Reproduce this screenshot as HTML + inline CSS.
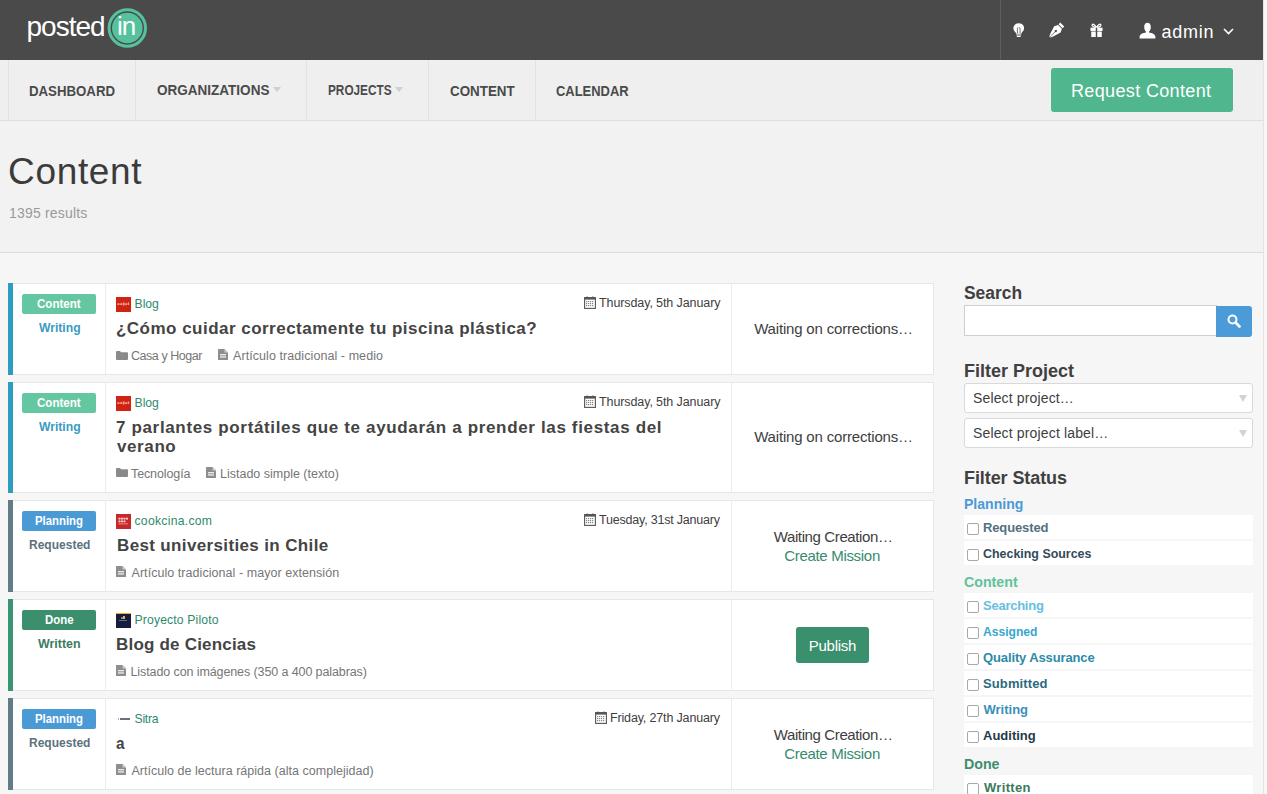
<!DOCTYPE html><html><head><meta charset="utf-8"><style>
html,body{margin:0;padding:0;width:1267px;height:794px;overflow:hidden;background:#f2f2f2;font-family:"Liberation Sans",sans-serif}
.t{position:absolute;white-space:nowrap;line-height:1}
</style></head><body>
<div style="position:absolute;left:0;top:253px;width:1263px;height:541px;background:#f6f6f6"></div>
<div style="position:absolute;left:0;top:0;width:1263px;height:60px;background:#4a4a4a"></div>
<div style="position:absolute;left:1000px;top:0;width:1px;height:60px;background:#5e5e5e"></div>
<svg style="position:absolute;left:107px;top:8px" width="41" height="41" viewBox="0 0 41 41">
<circle cx="20.3" cy="20" r="18.2" fill="none" stroke="#55c29d" stroke-width="3"/>
<circle cx="20.3" cy="20" r="15.3" fill="#55c29d"/>
</svg>
<svg style="position:absolute;left:1012.5px;top:22.5px" width="11.5" height="14.6" viewBox="0 0 13 16.5">
<path d="M6.5 0.3 C2.9 0.3 0.4 2.8 0.4 5.9 C0.4 8.2 1.8 9.3 2.9 10.6 C3.4 11.2 3.6 11.7 3.6 12.2 L9.4 12.2 C9.4 11.7 9.6 11.2 10.1 10.6 C11.2 9.3 12.6 8.2 12.6 5.9 C12.6 2.8 10.1 0.3 6.5 0.3 Z" fill="#fff"/>
<path d="M5 11.5 L5 6.2 Q5 4.9 6 5.2 M8 11.5 L8 6.2 Q8 4.9 7 5.2" stroke="#4a4a4a" stroke-width="0.9" fill="none"/>
<rect x="3.8" y="12.9" width="5.4" height="1.2" fill="#fff"/><rect x="4.2" y="14.6" width="4.6" height="1.3" rx="0.6" fill="#fff"/>
</svg>
<svg style="position:absolute;left:1049px;top:22px" width="16" height="16" viewBox="0 0 16 16">
<path d="M11.2 0.6 L15.2 4.6 L13.6 6.2 L9.6 2.2 Z" fill="#fff"/>
<path d="M9.1 2.9 L12.9 6.7 L11.6 10.6 L4.2 14.6 L1.3 15.6 L0.9 15.2 L6.2 9.9 A1.1 1.1 0 1 0 5.9 9.6 L0.6 14.9 L0.3 14.5 L1.4 11.5 L5.2 4.2 Z" fill="#fff"/>
</svg>
<svg style="position:absolute;left:1089.5px;top:22.5px" width="13" height="14.8" viewBox="0 0 14 16">
<path d="M7 5 C5.5 2.5 3.5 0.6 2.5 1.6 C1.5 2.6 3.5 4.6 7 5 C10.5 4.6 12.5 2.6 11.5 1.6 C10.5 0.6 8.5 2.5 7 5 Z" fill="none" stroke="#fff" stroke-width="1.3"/>
<rect x="0.5" y="5" width="13" height="3.6" fill="#fff"/>
<rect x="1.3" y="9.2" width="11.4" height="6.6" fill="#fff"/>
<rect x="6.2" y="5" width="1.6" height="10.8" fill="#4a4a4a"/>
</svg>
<svg style="position:absolute;left:1139px;top:22px" width="17" height="17" viewBox="0 0 17 17">
<path d="M8.5 0.8 C6.2 0.8 5.2 2.6 5.2 4.9 C5.2 7.0 6.0 8.7 7.0 9.6 L7.0 10.4 C4.0 10.9 0.9 12.0 0.6 14.5 L0.6 16.4 L16.4 16.4 L16.4 14.5 C16.1 12.0 13.0 10.9 10.0 10.4 L10.0 9.6 C11.0 8.7 11.8 7.0 11.8 4.9 C11.8 2.6 10.8 0.8 8.5 0.8 Z" fill="#fff"/>
</svg>
<svg style="position:absolute;left:1223px;top:28px" width="11" height="7" viewBox="0 0 11 7"><path d="M1 1 L5.5 5.5 L10 1" fill="none" stroke="#fff" stroke-width="1.6"/></svg>
<div style="position:absolute;left:0;top:60px;width:1263px;height:61px;background:#efefef;border-bottom:1px solid #dedede;box-sizing:border-box"></div>
<div style="position:absolute;left:8px;top:60px;width:1px;height:60px;background:#e2e2e2"></div>
<div style="position:absolute;left:135px;top:60px;width:1px;height:60px;background:#e2e2e2"></div>
<div style="position:absolute;left:306px;top:60px;width:1px;height:60px;background:#e2e2e2"></div>
<div style="position:absolute;left:428px;top:60px;width:1px;height:60px;background:#e2e2e2"></div>
<div style="position:absolute;left:535px;top:60px;width:1px;height:60px;background:#e2e2e2"></div>
<div style="position:absolute;left:273px;top:87px;width:0;height:0;border-left:4px solid transparent;border-right:4px solid transparent;border-top:5px solid #cfcfcf"></div>
<div style="position:absolute;left:394.5px;top:87px;width:0;height:0;border-left:4px solid transparent;border-right:4px solid transparent;border-top:5px solid #cfcfcf"></div>
<div style="position:absolute;left:1051px;top:68px;width:182px;height:44px;background:#50b68e;border-radius:3px"></div>
<div style="position:absolute;left:1263px;top:0;width:4px;height:794px;background:#f7f7f7;border-left:1px solid #e4e4e4;box-sizing:border-box"></div>
<div style="position:absolute;left:0;top:252px;width:1263px;height:1px;background:#dcdcdc"></div>
<div style="position:absolute;left:8px;top:283px;width:926px;height:92px;background:#fff;border:1px solid #e7e7e7;border-left:none;box-sizing:border-box"></div>
<div style="position:absolute;left:8px;top:283px;width:5px;height:92px;background:#2c9dc0"></div>
<div style="position:absolute;left:105px;top:284px;width:1px;height:90px;background:#ececec"></div>
<div style="position:absolute;left:731px;top:284px;width:1px;height:90px;background:#ececec"></div>
<div style="position:absolute;left:22px;top:294px;width:74px;height:20px;background:#65c7a1;border-radius:2px"></div>
<div style="position:absolute;left:116px;top:297px;width:15px;height:15px;background:#d02312"></div>
<svg style="position:absolute;left:117px;top:302px" width="13" height="4" viewBox="0 0 13 4"><path d="M0.5 1.2h2v1.8h-2zM3.2 1.2h2v1.8h-2zM5.8 0.6h1.8v2.8h-1.8zM8.2 1.2h2v1.8h-2zM10.8 0.4h1.4v2.6h-1.4z" fill="#f0a49c"/></svg>
<svg style="position:absolute;left:584px;top:296px" width="12" height="13" viewBox="0 0 12 13"><rect x="0.6" y="1.6" width="10.8" height="10.8" fill="#fff" stroke="#555" stroke-width="1.1"/><rect x="0.6" y="1.6" width="10.8" height="2" fill="#555"/><rect x="2" y="5" width="1.2" height="1.2" fill="#888"/><rect x="2" y="7" width="1.2" height="1.2" fill="#888"/><rect x="2" y="9" width="1.2" height="1.2" fill="#888"/><rect x="4" y="5" width="1.2" height="1.2" fill="#888"/><rect x="4" y="7" width="1.2" height="1.2" fill="#888"/><rect x="4" y="9" width="1.2" height="1.2" fill="#888"/><rect x="6" y="5" width="1.2" height="1.2" fill="#888"/><rect x="6" y="7" width="1.2" height="1.2" fill="#888"/><rect x="6" y="9" width="1.2" height="1.2" fill="#888"/><rect x="8" y="5" width="1.2" height="1.2" fill="#888"/><rect x="8" y="7" width="1.2" height="1.2" fill="#888"/><rect x="8" y="9" width="1.2" height="1.2" fill="#888"/><rect x="2.5" y="0.5" width="1.2" height="2" fill="#555"/><rect x="8.2" y="0.5" width="1.2" height="2" fill="#555"/></svg>
<svg style="position:absolute;left:116px;top:351px" width="12" height="9" viewBox="0 0 12 9"><path d="M0 1 Q0 0 1 0 L4 0 L5 1.3 L11 1.3 Q12 1.3 12 2.3 L12 8 Q12 9 11 9 L1 9 Q0 9 0 8 Z" fill="#8a8a8a"/></svg>
<svg style="position:absolute;left:217.5px;top:349px" width="10" height="11" viewBox="0 0 10 11"><path d="M0.5 0 L6.5 0 L10 3.5 L10 10.5 Q10 11 9.5 11 L0.5 11 Q0 11 0 10.5 L0 0.5 Q0 0 0.5 0 Z" fill="#8e8e8e"/><path d="M6.5 0 L6.5 3.5 L10 3.5" fill="#c9c9c9"/><rect x="2" y="5.2" width="6" height="1.1" fill="#fff"/><rect x="2" y="7.4" width="6" height="1.1" fill="#fff"/></svg>
<div style="position:absolute;left:8px;top:382px;width:926px;height:111px;background:#fff;border:1px solid #e7e7e7;border-left:none;box-sizing:border-box"></div>
<div style="position:absolute;left:8px;top:382px;width:5px;height:111px;background:#2c9dc0"></div>
<div style="position:absolute;left:105px;top:383px;width:1px;height:109px;background:#ececec"></div>
<div style="position:absolute;left:731px;top:383px;width:1px;height:109px;background:#ececec"></div>
<div style="position:absolute;left:22px;top:393px;width:74px;height:20px;background:#65c7a1;border-radius:2px"></div>
<div style="position:absolute;left:116px;top:396px;width:15px;height:15px;background:#d02312"></div>
<svg style="position:absolute;left:117px;top:401px" width="13" height="4" viewBox="0 0 13 4"><path d="M0.5 1.2h2v1.8h-2zM3.2 1.2h2v1.8h-2zM5.8 0.6h1.8v2.8h-1.8zM8.2 1.2h2v1.8h-2zM10.8 0.4h1.4v2.6h-1.4z" fill="#f0a49c"/></svg>
<svg style="position:absolute;left:584px;top:395px" width="12" height="13" viewBox="0 0 12 13"><rect x="0.6" y="1.6" width="10.8" height="10.8" fill="#fff" stroke="#555" stroke-width="1.1"/><rect x="0.6" y="1.6" width="10.8" height="2" fill="#555"/><rect x="2" y="5" width="1.2" height="1.2" fill="#888"/><rect x="2" y="7" width="1.2" height="1.2" fill="#888"/><rect x="2" y="9" width="1.2" height="1.2" fill="#888"/><rect x="4" y="5" width="1.2" height="1.2" fill="#888"/><rect x="4" y="7" width="1.2" height="1.2" fill="#888"/><rect x="4" y="9" width="1.2" height="1.2" fill="#888"/><rect x="6" y="5" width="1.2" height="1.2" fill="#888"/><rect x="6" y="7" width="1.2" height="1.2" fill="#888"/><rect x="6" y="9" width="1.2" height="1.2" fill="#888"/><rect x="8" y="5" width="1.2" height="1.2" fill="#888"/><rect x="8" y="7" width="1.2" height="1.2" fill="#888"/><rect x="8" y="9" width="1.2" height="1.2" fill="#888"/><rect x="2.5" y="0.5" width="1.2" height="2" fill="#555"/><rect x="8.2" y="0.5" width="1.2" height="2" fill="#555"/></svg>
<svg style="position:absolute;left:116px;top:468px" width="12" height="9" viewBox="0 0 12 9"><path d="M0 1 Q0 0 1 0 L4 0 L5 1.3 L11 1.3 Q12 1.3 12 2.3 L12 8 Q12 9 11 9 L1 9 Q0 9 0 8 Z" fill="#8a8a8a"/></svg>
<svg style="position:absolute;left:205.5px;top:467px" width="10" height="11" viewBox="0 0 10 11"><path d="M0.5 0 L6.5 0 L10 3.5 L10 10.5 Q10 11 9.5 11 L0.5 11 Q0 11 0 10.5 L0 0.5 Q0 0 0.5 0 Z" fill="#8e8e8e"/><path d="M6.5 0 L6.5 3.5 L10 3.5" fill="#c9c9c9"/><rect x="2" y="5.2" width="6" height="1.1" fill="#fff"/><rect x="2" y="7.4" width="6" height="1.1" fill="#fff"/></svg>
<div style="position:absolute;left:8px;top:500px;width:926px;height:92px;background:#fff;border:1px solid #e7e7e7;border-left:none;box-sizing:border-box"></div>
<div style="position:absolute;left:8px;top:500px;width:5px;height:92px;background:#617b87"></div>
<div style="position:absolute;left:105px;top:501px;width:1px;height:90px;background:#ececec"></div>
<div style="position:absolute;left:731px;top:501px;width:1px;height:90px;background:#ececec"></div>
<div style="position:absolute;left:22px;top:511px;width:74px;height:20px;background:#4a9ad6;border-radius:2px"></div>
<div style="position:absolute;left:116px;top:514px;width:15px;height:15px;background:#c8282a"></div>
<svg style="position:absolute;left:118px;top:517px" width="11" height="9" viewBox="0 0 11 9"><path d="M0.5 0.8h2v1.6h-2zM3 0.8h2v1.6h-2zM5.5 0.8h2v1.6h-2zM8 0.8h2v1.6h-2zM0.5 3.6h2v1.6h-2zM3 3.6h2v1.6h-2zM5.5 3.6h2v1.6h-2z" fill="#f4d4d4"/><rect x="0.5" y="6.5" width="9.5" height="0.8" fill="#e8a8a8"/></svg>
<svg style="position:absolute;left:584px;top:513px" width="12" height="13" viewBox="0 0 12 13"><rect x="0.6" y="1.6" width="10.8" height="10.8" fill="#fff" stroke="#555" stroke-width="1.1"/><rect x="0.6" y="1.6" width="10.8" height="2" fill="#555"/><rect x="2" y="5" width="1.2" height="1.2" fill="#888"/><rect x="2" y="7" width="1.2" height="1.2" fill="#888"/><rect x="2" y="9" width="1.2" height="1.2" fill="#888"/><rect x="4" y="5" width="1.2" height="1.2" fill="#888"/><rect x="4" y="7" width="1.2" height="1.2" fill="#888"/><rect x="4" y="9" width="1.2" height="1.2" fill="#888"/><rect x="6" y="5" width="1.2" height="1.2" fill="#888"/><rect x="6" y="7" width="1.2" height="1.2" fill="#888"/><rect x="6" y="9" width="1.2" height="1.2" fill="#888"/><rect x="8" y="5" width="1.2" height="1.2" fill="#888"/><rect x="8" y="7" width="1.2" height="1.2" fill="#888"/><rect x="8" y="9" width="1.2" height="1.2" fill="#888"/><rect x="2.5" y="0.5" width="1.2" height="2" fill="#555"/><rect x="8.2" y="0.5" width="1.2" height="2" fill="#555"/></svg>
<svg style="position:absolute;left:116px;top:566px" width="10" height="11" viewBox="0 0 10 11"><path d="M0.5 0 L6.5 0 L10 3.5 L10 10.5 Q10 11 9.5 11 L0.5 11 Q0 11 0 10.5 L0 0.5 Q0 0 0.5 0 Z" fill="#8e8e8e"/><path d="M6.5 0 L6.5 3.5 L10 3.5" fill="#c9c9c9"/><rect x="2" y="5.2" width="6" height="1.1" fill="#fff"/><rect x="2" y="7.4" width="6" height="1.1" fill="#fff"/></svg>
<div style="position:absolute;left:8px;top:599px;width:926px;height:92px;background:#fff;border:1px solid #e7e7e7;border-left:none;box-sizing:border-box"></div>
<div style="position:absolute;left:8px;top:599px;width:5px;height:92px;background:#3a9471"></div>
<div style="position:absolute;left:105px;top:600px;width:1px;height:90px;background:#ececec"></div>
<div style="position:absolute;left:731px;top:600px;width:1px;height:90px;background:#ececec"></div>
<div style="position:absolute;left:22px;top:610px;width:74px;height:20px;background:#3b8f6d;border-radius:2px"></div>
<div style="position:absolute;left:116px;top:613px;width:15px;height:15px;background:#161c3e"></div>
<div style="position:absolute;left:116px;top:613px;width:15px;height:1px;background:#e8b020"></div>
<div style="position:absolute;left:121px;top:617px;width:2px;height:2px;background:#7a7ad8"></div>
<div style="position:absolute;left:123px;top:616px;width:2px;height:3px;background:#e0b830"></div>
<div style="position:absolute;left:119px;top:620px;width:8px;height:1px;background:#6a6a80"></div>
<svg style="position:absolute;left:116px;top:665px" width="10" height="11" viewBox="0 0 10 11"><path d="M0.5 0 L6.5 0 L10 3.5 L10 10.5 Q10 11 9.5 11 L0.5 11 Q0 11 0 10.5 L0 0.5 Q0 0 0.5 0 Z" fill="#8e8e8e"/><path d="M6.5 0 L6.5 3.5 L10 3.5" fill="#c9c9c9"/><rect x="2" y="5.2" width="6" height="1.1" fill="#fff"/><rect x="2" y="7.4" width="6" height="1.1" fill="#fff"/></svg>
<div style="position:absolute;left:796px;top:627px;width:73px;height:36px;background:#3a8f6c;border-radius:3px"></div>
<div style="position:absolute;left:8px;top:698px;width:926px;height:92px;background:#fff;border:1px solid #e7e7e7;border-left:none;box-sizing:border-box"></div>
<div style="position:absolute;left:8px;top:698px;width:5px;height:92px;background:#617b87"></div>
<div style="position:absolute;left:105px;top:699px;width:1px;height:90px;background:#ececec"></div>
<div style="position:absolute;left:731px;top:699px;width:1px;height:90px;background:#ececec"></div>
<div style="position:absolute;left:22px;top:709px;width:74px;height:20px;background:#4a9ad6;border-radius:2px"></div>
<div style="position:absolute;left:118px;top:718px;width:1px;height:2px;background:#aaa"></div>
<div style="position:absolute;left:120px;top:718px;width:10px;height:1.6px;background:#6a7080"></div>
<svg style="position:absolute;left:595px;top:711px" width="12" height="13" viewBox="0 0 12 13"><rect x="0.6" y="1.6" width="10.8" height="10.8" fill="#fff" stroke="#555" stroke-width="1.1"/><rect x="0.6" y="1.6" width="10.8" height="2" fill="#555"/><rect x="2" y="5" width="1.2" height="1.2" fill="#888"/><rect x="2" y="7" width="1.2" height="1.2" fill="#888"/><rect x="2" y="9" width="1.2" height="1.2" fill="#888"/><rect x="4" y="5" width="1.2" height="1.2" fill="#888"/><rect x="4" y="7" width="1.2" height="1.2" fill="#888"/><rect x="4" y="9" width="1.2" height="1.2" fill="#888"/><rect x="6" y="5" width="1.2" height="1.2" fill="#888"/><rect x="6" y="7" width="1.2" height="1.2" fill="#888"/><rect x="6" y="9" width="1.2" height="1.2" fill="#888"/><rect x="8" y="5" width="1.2" height="1.2" fill="#888"/><rect x="8" y="7" width="1.2" height="1.2" fill="#888"/><rect x="8" y="9" width="1.2" height="1.2" fill="#888"/><rect x="2.5" y="0.5" width="1.2" height="2" fill="#555"/><rect x="8.2" y="0.5" width="1.2" height="2" fill="#555"/></svg>
<svg style="position:absolute;left:116px;top:764px" width="10" height="11" viewBox="0 0 10 11"><path d="M0.5 0 L6.5 0 L10 3.5 L10 10.5 Q10 11 9.5 11 L0.5 11 Q0 11 0 10.5 L0 0.5 Q0 0 0.5 0 Z" fill="#8e8e8e"/><path d="M6.5 0 L6.5 3.5 L10 3.5" fill="#c9c9c9"/><rect x="2" y="5.2" width="6" height="1.1" fill="#fff"/><rect x="2" y="7.4" width="6" height="1.1" fill="#fff"/></svg>
<div style="position:absolute;left:964px;top:305px;width:253px;height:31px;background:#fff;border:1px solid #cfcfcf;box-sizing:border-box"></div>
<div style="position:absolute;left:1216px;top:306px;width:36px;height:31px;background:#4a9bd8;border-radius:0 3px 3px 0"></div>
<svg style="position:absolute;left:1227px;top:314px" width="14" height="14" viewBox="0 0 14 14"><circle cx="5.5" cy="5.5" r="4" fill="none" stroke="#fff" stroke-width="2"/><path d="M8.5 8.5 L12.5 12.5" stroke="#fff" stroke-width="2.6" stroke-linecap="round"/></svg>
<div style="position:absolute;left:964px;top:383px;width:289px;height:30px;background:#fff;border:1px solid #d9d9d9;border-radius:3px;box-sizing:border-box"></div>
<div style="position:absolute;left:1239px;top:395px;width:0;height:0;border-left:4px solid transparent;border-right:4px solid transparent;border-top:7px solid #d2d2d2"></div>
<div style="position:absolute;left:964px;top:418px;width:289px;height:30px;background:#fff;border:1px solid #d9d9d9;border-radius:3px;box-sizing:border-box"></div>
<div style="position:absolute;left:1239px;top:430px;width:0;height:0;border-left:4px solid transparent;border-right:4px solid transparent;border-top:7px solid #d2d2d2"></div>
<div style="position:absolute;left:964px;top:515px;width:289px;height:24px;background:#fff"></div>
<div style="position:absolute;left:967px;top:523px;width:12px;height:12px;border:1px solid #a8a8a8;border-radius:2px;box-sizing:border-box;background:#fff"></div>
<div style="position:absolute;left:964px;top:541px;width:289px;height:24px;background:#fff"></div>
<div style="position:absolute;left:967px;top:549px;width:12px;height:12px;border:1px solid #a8a8a8;border-radius:2px;box-sizing:border-box;background:#fff"></div>
<div style="position:absolute;left:964px;top:593px;width:289px;height:24px;background:#fff"></div>
<div style="position:absolute;left:967px;top:601px;width:12px;height:12px;border:1px solid #a8a8a8;border-radius:2px;box-sizing:border-box;background:#fff"></div>
<div style="position:absolute;left:964px;top:619px;width:289px;height:24px;background:#fff"></div>
<div style="position:absolute;left:967px;top:627px;width:12px;height:12px;border:1px solid #a8a8a8;border-radius:2px;box-sizing:border-box;background:#fff"></div>
<div style="position:absolute;left:964px;top:645px;width:289px;height:24px;background:#fff"></div>
<div style="position:absolute;left:967px;top:653px;width:12px;height:12px;border:1px solid #a8a8a8;border-radius:2px;box-sizing:border-box;background:#fff"></div>
<div style="position:absolute;left:964px;top:671px;width:289px;height:24px;background:#fff"></div>
<div style="position:absolute;left:967px;top:679px;width:12px;height:12px;border:1px solid #a8a8a8;border-radius:2px;box-sizing:border-box;background:#fff"></div>
<div style="position:absolute;left:964px;top:697px;width:289px;height:24px;background:#fff"></div>
<div style="position:absolute;left:967px;top:705px;width:12px;height:12px;border:1px solid #a8a8a8;border-radius:2px;box-sizing:border-box;background:#fff"></div>
<div style="position:absolute;left:964px;top:723px;width:289px;height:24px;background:#fff"></div>
<div style="position:absolute;left:967px;top:731px;width:12px;height:12px;border:1px solid #a8a8a8;border-radius:2px;box-sizing:border-box;background:#fff"></div>
<div style="position:absolute;left:964px;top:775px;width:289px;height:24px;background:#fff"></div>
<div style="position:absolute;left:967px;top:783px;width:12px;height:12px;border:1px solid #a8a8a8;border-radius:2px;box-sizing:border-box;background:#fff"></div>
<div class="t" id="t0" style="left:26.50px;top:13.30px;font-size:28px;font-weight:400;color:#ffffff;letter-spacing:-1.000px;">posted</div>
<div class="t" id="t1" style="left:117.00px;top:12.99px;font-size:26px;font-weight:400;color:#ffffff;letter-spacing:-1.000px;">in</div>
<div class="t" id="t2" style="left:1161.50px;top:22.76px;font-size:18px;font-weight:400;color:#ffffff;letter-spacing:0.750px;">admin</div>
<div class="t" id="t3" style="left:29.00px;top:84.15px;font-size:14px;font-weight:700;color:#4a4a4a;letter-spacing:0.000px;transform:scaleX(0.9451);transform-origin:0 0;">DASHBOARD</div>
<div class="t" id="t4" style="left:157.00px;top:83.15px;font-size:14px;font-weight:700;color:#4a4a4a;letter-spacing:0.000px;transform:scaleX(0.9658);transform-origin:0 0;">ORGANIZATIONS</div>
<div class="t" id="t5" style="left:328.00px;top:83.15px;font-size:14px;font-weight:700;color:#4a4a4a;letter-spacing:0.000px;transform:scaleX(0.8421);transform-origin:0 0;">PROJECTS</div>
<div class="t" id="t6" style="left:450.00px;top:84.15px;font-size:14px;font-weight:700;color:#4a4a4a;letter-spacing:0.000px;transform:scaleX(0.9559);transform-origin:0 0;">CONTENT</div>
<div class="t" id="t7" style="left:556.00px;top:84.15px;font-size:14px;font-weight:700;color:#4a4a4a;letter-spacing:0.000px;transform:scaleX(0.9241);transform-origin:0 0;">CALENDAR</div>
<div class="t" id="t8" style="left:1071.00px;top:81.76px;font-size:18px;font-weight:400;color:#ffffff;letter-spacing:0.357px;">Request Content</div>
<div class="t" id="t9" style="left:8.00px;top:152.68px;font-size:37px;font-weight:400;color:#3b3b3b;letter-spacing:0.667px;">Content</div>
<div class="t" id="t10" style="left:9.00px;top:206.15px;font-size:14px;font-weight:400;color:#9a9a9a;letter-spacing:0.182px;">1395 results</div>
<div class="t" id="t11" style="left:36.75px;top:296.50px;font-size:13px;font-weight:700;color:#ffffff;letter-spacing:0.000px;transform:scaleX(0.8900);transform-origin:0 0;">Content</div>
<div class="t" id="t12" style="left:38.93px;top:320.50px;font-size:13px;font-weight:700;color:#3a9bc3;letter-spacing:0.000px;transform:scaleX(0.9333);transform-origin:0 0;">Writing</div>
<div class="t" id="t13" style="left:134.50px;top:297.67px;font-size:12.2px;font-weight:400;color:#2f8a6c;letter-spacing:0.000px;">Blog</div>
<div class="t" id="t14" style="left:599.00px;top:297.42px;font-size:12.5px;font-weight:400;color:#404040;letter-spacing:-0.100px;">Thursday, 5th January</div>
<div class="t" id="t15" style="left:116.00px;top:320.11px;font-size:17px;font-weight:700;color:#444444;letter-spacing:0.478px;">¿Cómo cuidar correctamente tu piscina plástica?</div>
<div class="t" id="t16" style="left:131.00px;top:349.92px;font-size:12.5px;font-weight:400;color:#767676;letter-spacing:-0.455px;">Casa y Hogar</div>
<div class="t" id="t17" style="left:233.00px;top:349.92px;font-size:12.5px;font-weight:400;color:#767676;letter-spacing:0.074px;">Artículo tradicional - medio</div>
<div class="t" id="t18" style="left:754.20px;top:320.80px;font-size:15px;font-weight:400;color:#3e3e3e;letter-spacing:-0.182px;">Waiting on corrections…</div>
<div class="t" id="t19" style="left:36.75px;top:395.50px;font-size:13px;font-weight:700;color:#ffffff;letter-spacing:0.000px;transform:scaleX(0.8900);transform-origin:0 0;">Content</div>
<div class="t" id="t20" style="left:38.93px;top:419.50px;font-size:13px;font-weight:700;color:#3a9bc3;letter-spacing:0.000px;transform:scaleX(0.9333);transform-origin:0 0;">Writing</div>
<div class="t" id="t21" style="left:134.50px;top:396.67px;font-size:12.2px;font-weight:400;color:#2f8a6c;letter-spacing:0.000px;">Blog</div>
<div class="t" id="t22" style="left:599.00px;top:396.42px;font-size:12.5px;font-weight:400;color:#404040;letter-spacing:-0.100px;">Thursday, 5th January</div>
<div class="t" id="t23" style="left:116.00px;top:419.11px;font-size:17px;font-weight:700;color:#444444;letter-spacing:0.651px;">7 parlantes portátiles que te ayudarán a prender las fiestas del</div>
<div class="t" id="t24" style="left:117.00px;top:438.41px;font-size:17px;font-weight:700;color:#444444;letter-spacing:0.600px;">verano</div>
<div class="t" id="t25" style="left:131.00px;top:467.72px;font-size:12.5px;font-weight:400;color:#767676;letter-spacing:-0.111px;">Tecnología</div>
<div class="t" id="t26" style="left:220.00px;top:467.72px;font-size:12.5px;font-weight:400;color:#767676;letter-spacing:0.000px;">Listado simple (texto)</div>
<div class="t" id="t27" style="left:754.20px;top:429.30px;font-size:15px;font-weight:400;color:#3e3e3e;letter-spacing:-0.182px;">Waiting on corrections…</div>
<div class="t" id="t28" style="left:35.00px;top:513.50px;font-size:13px;font-weight:700;color:#ffffff;letter-spacing:0.000px;transform:scaleX(0.8727);transform-origin:0 0;">Planning</div>
<div class="t" id="t29" style="left:28.50px;top:537.50px;font-size:13px;font-weight:700;color:#5c7180;letter-spacing:0.000px;transform:scaleX(0.9242);transform-origin:0 0;">Requested</div>
<div class="t" id="t30" style="left:134.50px;top:514.67px;font-size:12.2px;font-weight:400;color:#2f8a6c;letter-spacing:0.273px;">cookcina.com</div>
<div class="t" id="t31" style="left:599.00px;top:514.42px;font-size:12.5px;font-weight:400;color:#404040;letter-spacing:-0.200px;">Tuesday, 31st January</div>
<div class="t" id="t32" style="left:117.00px;top:537.11px;font-size:17px;font-weight:700;color:#444444;letter-spacing:0.360px;">Best universities in Chile</div>
<div class="t" id="t33" style="left:131.50px;top:566.92px;font-size:12.5px;font-weight:400;color:#767676;letter-spacing:0.054px;">Artículo tradicional - mayor extensión</div>
<div class="t" id="t34" style="left:773.70px;top:528.80px;font-size:15px;font-weight:400;color:#3e3e3e;letter-spacing:-0.375px;">Waiting Creation…</div>
<div class="t" id="t35" style="left:784.20px;top:548.20px;font-size:15px;font-weight:400;color:#378a6e;letter-spacing:-0.308px;">Create Mission</div>
<div class="t" id="t36" style="left:44.50px;top:612.50px;font-size:13px;font-weight:700;color:#ffffff;letter-spacing:0.000px;transform:scaleX(0.8788);transform-origin:0 0;">Done</div>
<div class="t" id="t37" style="left:38.46px;top:636.50px;font-size:13px;font-weight:700;color:#3c7d62;letter-spacing:0.000px;transform:scaleX(0.9556);transform-origin:0 0;">Written</div>
<div class="t" id="t38" style="left:134.50px;top:613.67px;font-size:12.2px;font-weight:400;color:#2f8a6c;letter-spacing:0.143px;">Proyecto Piloto</div>
<div class="t" id="t39" style="left:116.00px;top:636.11px;font-size:17px;font-weight:700;color:#444444;letter-spacing:0.200px;">Blog de Ciencias</div>
<div class="t" id="t40" style="left:130.50px;top:665.92px;font-size:12.5px;font-weight:400;color:#767676;letter-spacing:-0.100px;">Listado con imágenes (350 a 400 palabras)</div>
<div class="t" id="t41" style="left:808.75px;top:638.30px;font-size:15px;font-weight:400;color:#ffffff;letter-spacing:-0.250px;">Publish</div>
<div class="t" id="t42" style="left:35.00px;top:711.50px;font-size:13px;font-weight:700;color:#ffffff;letter-spacing:0.000px;transform:scaleX(0.8727);transform-origin:0 0;">Planning</div>
<div class="t" id="t43" style="left:28.50px;top:735.50px;font-size:13px;font-weight:700;color:#5c7180;letter-spacing:0.000px;transform:scaleX(0.9242);transform-origin:0 0;">Requested</div>
<div class="t" id="t44" style="left:134.50px;top:712.67px;font-size:12.2px;font-weight:400;color:#2f8a6c;letter-spacing:-0.250px;">Sitra</div>
<div class="t" id="t45" style="left:610.00px;top:712.42px;font-size:12.5px;font-weight:400;color:#404040;letter-spacing:-0.158px;">Friday, 27th January</div>
<div class="t" id="t46" style="left:116.00px;top:735.11px;font-size:17px;font-weight:700;color:#444444;letter-spacing:0.000px;transform:scaleX(0.9000);transform-origin:0 0;">a</div>
<div class="t" id="t47" style="left:131.50px;top:764.92px;font-size:12.5px;font-weight:400;color:#767676;letter-spacing:0.023px;">Artículo de lectura rápida (alta complejidad)</div>
<div class="t" id="t48" style="left:773.70px;top:726.80px;font-size:15px;font-weight:400;color:#3e3e3e;letter-spacing:-0.375px;">Waiting Creation…</div>
<div class="t" id="t49" style="left:784.20px;top:746.20px;font-size:15px;font-weight:400;color:#378a6e;letter-spacing:-0.308px;">Create Mission</div>
<div class="t" id="t50" style="left:964.00px;top:283.76px;font-size:18px;font-weight:700;color:#404040;letter-spacing:0.000px;transform:scaleX(0.9667);transform-origin:0 0;">Search</div>
<div class="t" id="t51" style="left:964.00px;top:361.76px;font-size:18px;font-weight:700;color:#404040;letter-spacing:0.000px;">Filter Project</div>
<div class="t" id="t52" style="left:973.00px;top:390.95px;font-size:14px;font-weight:400;color:#404040;letter-spacing:0.143px;">Select project…</div>
<div class="t" id="t53" style="left:973.00px;top:425.95px;font-size:14px;font-weight:400;color:#404040;letter-spacing:0.150px;">Select project label…</div>
<div class="t" id="t54" style="left:964.00px;top:468.76px;font-size:18px;font-weight:700;color:#404040;letter-spacing:-0.083px;">Filter Status</div>
<div class="t" id="t55" style="left:964.00px;top:496.00px;font-size:15px;font-weight:700;color:#4a9ad6;letter-spacing:0.000px;transform:scaleX(0.9365);transform-origin:0 0;">Planning</div>
<div class="t" id="t56" style="left:983.00px;top:521.00px;font-size:13px;font-weight:700;color:#527080;letter-spacing:-0.125px;">Requested</div>
<div class="t" id="t57" style="left:983.00px;top:547.00px;font-size:13px;font-weight:700;color:#34495a;letter-spacing:0.000px;transform:scaleX(0.9561);transform-origin:0 0;">Checking Sources</div>
<div class="t" id="t58" style="left:964.00px;top:574.30px;font-size:15px;font-weight:700;color:#5ec39a;letter-spacing:0.000px;transform:scaleX(0.9474);transform-origin:0 0;">Content</div>
<div class="t" id="t59" style="left:983.00px;top:599.00px;font-size:13px;font-weight:700;color:#66c0e0;letter-spacing:-0.250px;">Searching</div>
<div class="t" id="t60" style="left:983.00px;top:625.00px;font-size:13px;font-weight:700;color:#36a8cc;letter-spacing:0.000px;transform:scaleX(0.9310);transform-origin:0 0;">Assigned</div>
<div class="t" id="t61" style="left:983.00px;top:651.00px;font-size:13px;font-weight:700;color:#2e8aa8;letter-spacing:-0.125px;">Quality Assurance</div>
<div class="t" id="t62" style="left:983.00px;top:677.00px;font-size:13px;font-weight:700;color:#2c6a80;letter-spacing:0.125px;">Submitted</div>
<div class="t" id="t63" style="left:983.50px;top:703.00px;font-size:13px;font-weight:700;color:#3a8fba;letter-spacing:0.000px;">Writing</div>
<div class="t" id="t64" style="left:983.00px;top:729.00px;font-size:13px;font-weight:700;color:#243a4a;letter-spacing:0.000px;">Auditing</div>
<div class="t" id="t65" style="left:964.00px;top:756.30px;font-size:15px;font-weight:700;color:#3b8f6d;letter-spacing:0.000px;transform:scaleX(0.9474);transform-origin:0 0;">Done</div>
<div class="t" id="t66" style="left:984.00px;top:781.00px;font-size:13px;font-weight:700;color:#3a7a5e;letter-spacing:0.333px;">Written</div>
</body></html>
